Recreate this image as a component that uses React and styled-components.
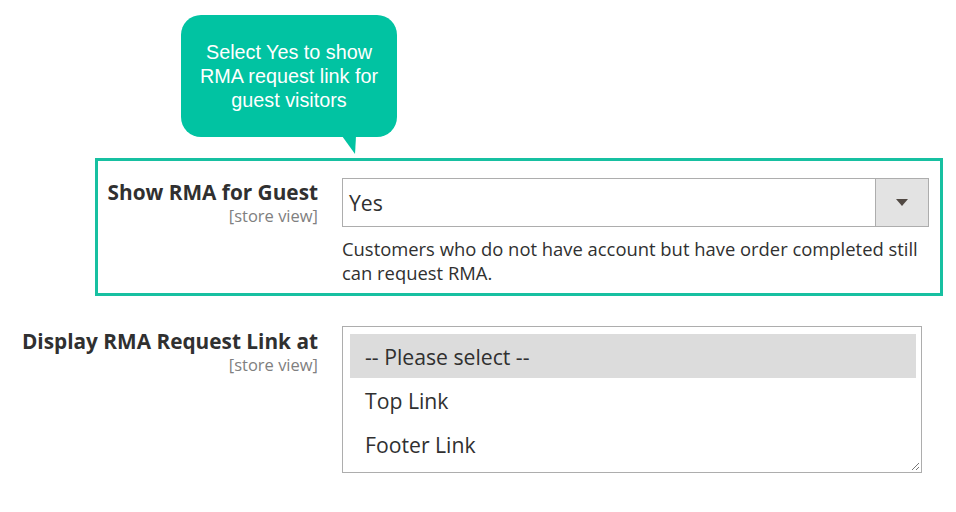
import React from "react";
import styled, { createGlobalStyle } from "styled-components";

const GlobalStyle = createGlobalStyle`
  html, body {
    margin: 0;
    padding: 0;
    background: #ffffff;
  }
  body {
    font-family: "Open Sans", "Noto Sans", sans-serif;
    color: #303030;
  }
`;

const Page = styled.div`
  width: 956px;
  height: 512px;
  padding-top: 15px;
  box-sizing: border-box;
  overflow: hidden;
`;

const Bubble = styled.div`
  position: relative;
  margin-left: 181px;
  width: 216px;
  height: 122px;
  box-sizing: border-box;
  background: #01c3a2;
  border-radius: 20px;
  display: flex;
  align-items: center;
  justify-content: center;
  text-align: center;
  font-family: "Liberation Sans", Arial, sans-serif;
  font-size: 19.8px;
  line-height: 24px;
  color: #ffffff;
  padding: 0 8px;

  &::after {
    content: "";
    position: absolute;
    left: 161px;
    top: 121px;
    width: 14px;
    height: 18px;
    background: #01c3a2;
    clip-path: polygon(0 0, 100% 0, 93% 100%);
  }
`;

const Frame = styled.div`
  margin-top: 21px;
  margin-left: 95px;
  width: 848px;
  box-sizing: border-box;
  border: 3px solid #17c0a1;
  padding: 17px 11px 8px 0;
`;

const Row = styled.div`
  display: grid;
  grid-template-columns: ${({ $labelWidth }) => $labelWidth}px 1fr;
  column-gap: 24px;
  margin-top: ${({ $top }) => $top || 0}px;
`;

const LabelCol = styled.div`
  text-align: right;
  white-space: nowrap;
  padding-top: ${({ $pad }) => $pad}px;
`;

const Label = styled.div`
  font-weight: 700;
  font-size: 20.8px;
  line-height: 28px;
  color: #303030;
`;

const Scope = styled.div`
  font-size: 16.5px;
  line-height: 22px;
  margin-top: -1px;
  color: #808080;
`;

const Select = styled.div`
  display: flex;
  height: 49px;
  box-sizing: border-box;
  border: 1px solid #adadad;
  background: #ffffff;
`;

const SelectValue = styled.div`
  flex: 1;
  display: flex;
  align-items: center;
  padding-left: 6px;
  font-size: 21.2px;
  color: #303030;
`;

const ArrowBox = styled.div`
  width: 52px;
  border-left: 1px solid #adadad;
  background: #e3e3e3;
  display: flex;
  align-items: center;
  justify-content: center;
`;

const Note = styled.div`
  margin-top: 10px;
  font-size: 18.4px;
  line-height: 24px;
  color: #303030;
`;

const ListBox = styled.div`
  position: relative;
  width: 580px;
  height: 147px;
  box-sizing: border-box;
  border: 1px solid #adadad;
  padding: 7px 5px 6px 7px;
`;

const Option = styled.div`
  height: 44px;
  display: flex;
  align-items: center;
  padding-left: 15px;
  font-size: 21.2px;
  color: #303030;
  background: ${({ $selected }) => ($selected ? "#dcdcdc" : "transparent")};
`;

const Grip = styled.svg`
  position: absolute;
  right: 1px;
  bottom: 1px;
`;

export default function App() {
  return (
    <Page>
      <GlobalStyle />
      <Bubble>Select Yes to show RMA request link for guest visitors</Bubble>

      <Frame>
        <Row $labelWidth={220}>
          <LabelCol $pad={0}>
            <Label>Show RMA for Guest</Label>
            <Scope>[store view]</Scope>
          </LabelCol>
          <div>
            <Select>
              <SelectValue>Yes</SelectValue>
              <ArrowBox>
                <svg width="12" height="7" viewBox="0 0 12 7">
                  <polygon points="0,0 12,0 6,7" fill="#514943" />
                </svg>
              </ArrowBox>
            </Select>
            <Note>
              Customers who do not have account but have order completed still
              can request RMA.
            </Note>
          </div>
        </Row>
      </Frame>

      <Row $labelWidth={318} $top={30}>
        <LabelCol $pad={1}>
          <Label>Display RMA Request Link at</Label>
          <Scope>[store view]</Scope>
        </LabelCol>
        <ListBox>
          <Option $selected>-- Please select --</Option>
          <Option>Top Link</Option>
          <Option>Footer Link</Option>
          <Grip width="9" height="9" viewBox="0 0 9 9">
            <line x1="1" y1="8" x2="8" y2="1" stroke="#777" strokeWidth="1" />
            <line x1="5" y1="8" x2="8" y2="5" stroke="#777" strokeWidth="1" />
          </Grip>
        </ListBox>
      </Row>
    </Page>
  );
}
